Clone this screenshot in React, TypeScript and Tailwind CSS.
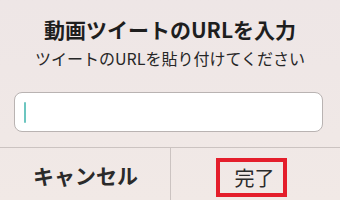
export default function App() {
  const font = { fontFamily: '"Noto Sans CJK JP", "Noto Sans", sans-serif' };
  return (
    <div
      className="w-[340px] h-[200px] overflow-hidden flex flex-col bg-gradient-to-b from-[#eee6e6] to-[#f1e9e6] text-[#1e1e1e]"
      style={font}
    >
      <div className="pt-[15px] flex flex-col items-center">
        <div className="text-[21px] leading-[28px] font-bold">動画ツイートのURLを入力</div>
        <div className="mt-[4px] text-[16px] leading-[22px] text-[#262626]">ツイートのURLを貼り付けてください</div>
      </div>
      <div className="mt-[23px] ml-[14px] w-[309px] h-[40px] rounded-[8px] border border-[#b9b3b2] bg-white flex items-center pl-[9px]">
        <div className="w-[2px] h-[21px] bg-[#6cc6c0] rounded-full" />
      </div>
      <div className="mt-[15px] h-px bg-[#cbc3c1]" />
      <div className="flex flex-1">
        <div className="w-[170px] flex items-center justify-center pt-[1px] pl-[1px]">
          <span className="text-[21px] leading-[26px] font-bold text-[#2a2a2a]">キャンセル</span>
        </div>
        <div className="w-px bg-[#cbc3c1]" />
        <div className="flex-1 flex items-start pt-[10px] pl-[45px]">
          <div className="w-[71px] h-[39px] border-[4px] border-[#e41e2b] flex items-center justify-center pl-[6px]">
            <span className="text-[20px] leading-[26px] text-[#2a2a2a]">完了</span>
          </div>
        </div>
      </div>
    </div>
  );
}
